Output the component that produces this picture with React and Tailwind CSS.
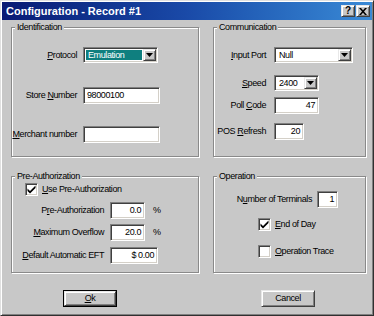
import React from "react";

const T = "font-['Liberation_Sans',Arial,sans-serif] text-[9px] tracking-[-0.4px] text-black leading-none";
const SUNKEN = "border border-t-[#808080] border-l-[#808080] border-b-white border-r-white shadow-[inset_1px_1px_0_#404040,inset_-1px_-1px_0_#d4d0c8]";
const RAISED = "border border-t-[#e8e8e8] border-l-[#e8e8e8] border-b-[#404040] border-r-[#404040] shadow-[inset_1px_1px_0_#ffffff,inset_-1px_-1px_0_#808080] bg-[#c8c8c8]";

function U({ children }) {
  return <span className="underline underline-offset-[1px]">{children}</span>;
}

function Group({ label, className, children }) {
  return (
    <div className={"relative border border-[#8a8a8a] shadow-[inset_1px_1px_0_#ffffff,1px_1px_0_#ffffff] " + className}>
      <span className={T + " absolute -top-[5px] left-[3px] px-[2px] bg-[#c8c8c8]"}>{label}</span>
      {children}
    </div>
  );
}

function Arrow() {
  return (
    <div className={RAISED + " w-[13px] h-full flex items-center justify-center"}>
      <svg width="7" height="4" viewBox="0 0 7 4">
        <path d="M0 0h7L3.5 4z" fill="#000" />
      </svg>
    </div>
  );
}

function Select({ value, width, selected }) {
  return (
    <div className={SUNKEN + " bg-white h-[16px] flex items-stretch p-[1px] " + width}>
      <div className="flex-1 flex items-center p-[1px]">
        <div className={"h-full w-full flex items-center pl-[2px] " + (selected ? "bg-[#0f7f7f] text-white" : "")}>
          <span className={T + (selected ? " !text-white" : "")}>{value}</span>
        </div>
      </div>
      <Arrow />
    </div>
  );
}

function Field({ value, width, right }) {
  return (
    <div className={SUNKEN + " bg-white h-[17px] flex items-center px-[3px] " + width + (right ? " justify-end" : "")}>
      <span className={T}>{value}</span>
    </div>
  );
}

function Check({ checked }) {
  return (
    <div className={SUNKEN + " bg-white w-[13px] h-[13px] flex items-center justify-center"}>
      {checked && (
        <svg width="9" height="9" viewBox="0 0 9 9">
          <path d="M0.5 3.5l2.5 2.5L8.5 0.5v2.5L3 8.5 0.5 6z" fill="#000" />
        </svg>
      )}
    </div>
  );
}

export default function App() {
  return (
    <div className="w-[374px] h-[316px] bg-[#c8c8c8] border border-t-[#e0e0e0] border-l-[#e0e0e0] border-r-[#303030] border-b-[#303030] shadow-[inset_1px_1px_0_#ffffff,inset_-1px_-1px_0_#808080] p-[1px] flex flex-col">
      {/* Title bar */}
      <div className="h-[18px] bg-gradient-to-r from-[#0a1a74] via-[#1a4aa8] to-[#3a8ad6] flex items-center justify-between pl-[4px] pr-[2px]">
        <span className="font-['Liberation_Sans',Arial,sans-serif] text-[11px] font-bold text-white leading-none">
          Configuration - Record #1
        </span>
        <div className="flex gap-[1px]">
          <div className={RAISED + " w-[14px] h-[12px] flex items-center justify-center"}>
            <span className="font-['Liberation_Sans',Arial,sans-serif] text-[10px] font-bold leading-none text-black">?</span>
          </div>
          <div className={RAISED + " w-[14px] h-[12px] flex items-center justify-center"}>
            <svg width="8" height="7" viewBox="0 0 8 7">
              <path d="M0 0h2l2 2.2L6 0h2L5 3.5 8 7H6L4 4.8 2 7H0l3-3.5z" fill="#000" />
            </svg>
          </div>
        </div>
      </div>

      {/* Row 1 */}
      <div className="flex ml-[9px] mt-[7px] gap-[14px]">
        <Group label="Identification" className="w-[188px] h-[130px]">
          <div className="flex flex-col pt-[19px]">
            <div className="flex items-center h-[16px]">
              <span className={T + " w-[65px] text-right"}><U>P</U>rotocol</span>
              <div className="ml-[6px]"><Select value="Emulation" width="w-[75px]" selected /></div>
            </div>
            <div className="flex items-center h-[17px] mt-[24px]">
              <span className={T + " w-[65px] text-right"}>Store <U>N</U>umber</span>
              <div className="ml-[6px]"><Field value="98000100" width="w-[77px]" /></div>
            </div>
            <div className="flex items-center h-[17px] mt-[22px]">
              <span className={T + " w-[65px] text-right"}><U>M</U>erchant number</span>
              <div className="ml-[6px]"><Field value="" width="w-[77px]" /></div>
            </div>
          </div>
        </Group>
        <Group label="Communication" className="w-[153px] h-[130px]">
          <div className="flex flex-col pt-[19px]">
            <div className="flex items-center h-[16px]">
              <span className={T + " w-[52px] text-right"}><U>I</U>nput Port</span>
              <div className="ml-[8px]"><Select value="Null" width="w-[79px]" /></div>
            </div>
            <div className="flex items-center h-[16px] mt-[12px]">
              <span className={T + " w-[52px] text-right"}><U>S</U>peed</span>
              <div className="ml-[8px]"><Select value="2400" width="w-[45px]" /></div>
            </div>
            <div className="flex items-center h-[17px] mt-[6px]">
              <span className={T + " w-[52px] text-right"}>Poll <U>C</U>ode</span>
              <div className="ml-[8px]"><Field value="47" width="w-[45px]" right /></div>
            </div>
            <div className="flex items-center h-[17px] mt-[9px]">
              <span className={T + " w-[52px] text-right"}>POS <U>R</U>efresh</span>
              <div className="ml-[8px]"><Field value="20" width="w-[30px]" right /></div>
            </div>
          </div>
        </Group>
      </div>

      {/* Row 2 */}
      <div className="flex ml-[9px] mt-[19px] gap-[14px]">
        <Group label="Pre-Authorization" className="w-[188px] h-[97px]">
          <div className="flex flex-col pt-[6px]">
            <div className="flex items-center h-[13px] ml-[13px]">
              <Check checked />
              <span className={T + " ml-[4px]"}><U>U</U>se Pre-Authorization</span>
            </div>
            <div className="flex items-center h-[17px] mt-[6px]">
              <span className={T + " w-[92px] text-right"}>P<U>r</U>e-Authorization</span>
              <div className="ml-[6px]"><Field value="0.0" width="w-[35px]" right /></div>
              <span className={T + " ml-[8px]"}>%</span>
            </div>
            <div className="flex items-center h-[17px] mt-[5px]">
              <span className={T + " w-[92px] text-right"}><U>M</U>aximum Overflow</span>
              <div className="ml-[6px]"><Field value="20.0" width="w-[35px]" right /></div>
              <span className={T + " ml-[8px]"}>%</span>
            </div>
            <div className="flex items-center h-[17px] mt-[6px]">
              <span className={T + " w-[92px] text-right"}><U>D</U>efault Automatic EFT</span>
              <div className="ml-[6px]"><Field value="$ 0.00" width="w-[48px]" right /></div>
            </div>
          </div>
        </Group>
        <Group label="Operation" className="w-[153px] h-[97px]">
          <div className="flex flex-col pt-[14px]">
            <div className="flex items-center h-[17px]">
              <span className={T + " w-[98px] text-right"}>N<U>u</U>mber of Terminals</span>
              <div className="ml-[5px]"><Field value="1" width="w-[21px]" right /></div>
            </div>
            <div className="flex items-center h-[13px] mt-[10px] ml-[44px]">
              <Check checked />
              <span className={T + " ml-[4px]"}><U>E</U>nd of Day</span>
            </div>
            <div className="flex items-center h-[13px] mt-[14px] ml-[44px]">
              <Check />
              <span className={T + " ml-[4px]"}><U>O</U>peration Trace</span>
            </div>
          </div>
        </Group>
      </div>

      {/* Buttons */}
      <div className="flex ml-[61px] mt-[17px] gap-[144px]">
        <div className="w-[54px] h-[17px] border border-black">
          <div className={RAISED + " w-full h-full flex items-center justify-center"}>
            <span className={T}><U>O</U>k</span>
          </div>
        </div>
        <div className={RAISED + " w-[54px] h-[17px] flex items-center justify-center"}>
          <span className={T}>Cancel</span>
        </div>
      </div>
    </div>
  );
}
